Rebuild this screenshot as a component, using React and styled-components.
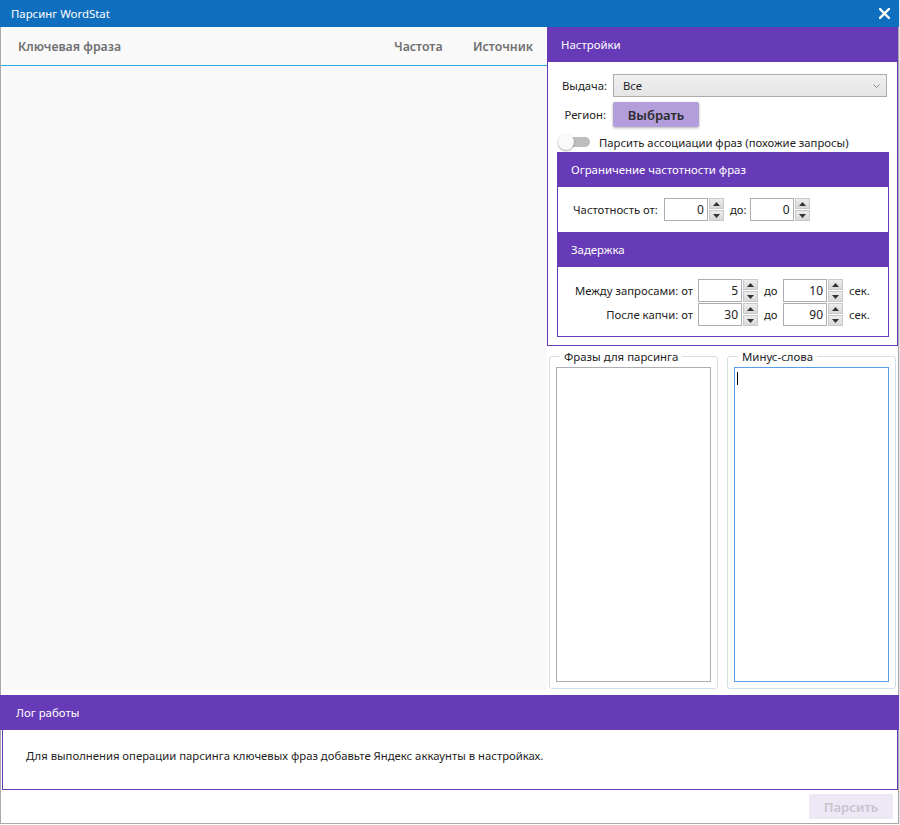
import React from "react";
import styled, { createGlobalStyle } from "styled-components";

const Global = createGlobalStyle`
  html, body { margin: 0; padding: 0; background: #ffffff; }
  body { font-family: "Noto Sans", "Open Sans", sans-serif; font-size: 11.3px; color: #222; }
  * { box-sizing: border-box; }
`;

const PURPLE = "#673ab7";

const Window = styled.div`
  width: 899px;
  height: 824px;
  display: flex;
  flex-direction: column;
  border: 1px solid #a9a9a9;
  border-top: none;
  background: #fff;
  box-shadow: 1px 1px 2px rgba(0,0,0,0.15);
`;

const TitleBar = styled.div`
  height: 27px;
  margin: 0 -1px;
  background: #106ebe;
  color: #fff;
  display: flex;
  align-items: center;
  justify-content: space-between;
  padding: 0 9px 0 11px;
  font-size: 11.4px;
  flex-shrink: 0;
`;

const CloseBtn = styled.div`
  width: 12px;
  height: 12px;
  display: flex;
  align-items: center;
  justify-content: center;
`;

const Main = styled.div`
  display: flex;
  height: 663px;
  flex-shrink: 0;
`;

const ListPanel = styled.div`
  width: 546px;
  background: #f9f9f9;
  display: flex;
  flex-direction: column;
`;

const ListHeader = styled.div`
  height: 39px;
  display: flex;
  align-items: center;
  border-bottom: 1px solid #2aa8e2;
  color: #707070;
  font-weight: 600;
  font-size: 12.3px;
  padding-left: 17px;
`;

const HeaderCell = styled.div`
  flex: ${(p) => (p.$grow ? 1 : "none")};
  width: ${(p) => (p.$w ? p.$w + "px" : "auto")};
`;

const RightPanel = styled.div`
  width: 351px;
  display: flex;
  flex-direction: column;
`;

const Group = styled.div`
  border: 1px solid ${PURPLE};
  border-top: none;
  display: flex;
  flex-direction: column;
`;

const GroupHeader = styled.div`
  height: ${(p) => p.$h || 35}px;
  background: ${PURPLE};
  color: #fff;
  display: flex;
  align-items: center;
  padding-left: ${(p) => p.$pl || 14}px;
  font-size: 11.4px;
  flex-shrink: 0;
`;

const SettingsBody = styled.div`
  padding: 12px 8px 8px 8px;
  display: flex;
  flex-direction: column;
`;

const FormGrid = styled.div`
  display: grid;
  grid-template-columns: 44px 1fr;
  column-gap: 7px;
  row-gap: 5px;
  align-items: center;
  padding-left: 6px;
  padding-right: 2px;
`;

const Label = styled.div`
  text-align: ${(p) => p.$align || "left"};
  white-space: nowrap;
  color: #222;
`;

const Combo = styled.div`
  height: 23px;
  border: 1px solid #acacac;
  background: linear-gradient(#f0f0f0, #e5e5e5);
  display: flex;
  align-items: center;
  justify-content: space-between;
  padding: 0 6px 0 9px;
`;

const ChooseRow = styled.div`
  display: flex;
`;

const ChooseBtn = styled.div`
  width: 86px;
  height: 25px;
  background: #b39ddb;
  color: #2b2b2b;
  font-size: 13px;
  font-weight: 600;
  display: flex;
  align-items: center;
  justify-content: center;
  border-radius: 2px;
  box-shadow: 0 1px 3px rgba(0,0,0,0.3);
`;

const ToggleRow = styled.div`
  display: flex;
  align-items: center;
  gap: 9px;
  height: 18px;
  margin-top: 6px;
  padding-left: 2px;
`;

const Toggle = styled.div`
  width: 32px;
  height: 16px;
  display: flex;
  align-items: center;
  justify-content: flex-end;
  position: relative;
`;

const Track = styled.div`
  width: 28px;
  height: 10px;
  border-radius: 5px;
  background: #bdbdbd;
`;

const Knob = styled.div`
  position: absolute;
  left: 0;
  top: 0;
  width: 16px;
  height: 16px;
  border-radius: 50%;
  background: #fafafa;
  box-shadow: 0 1px 2px rgba(0,0,0,0.35);
`;

const InnerGroup = styled(Group)`
  margin: 1px 0 0 1px;
`;

const InnerBody = styled.div`
  display: flex;
  flex-direction: column;
  justify-content: ${(p) => (p.$top ? "flex-start" : "center")};
  gap: 1px;
  padding: ${(p) => p.$pad || "0 0 0 15px"};
  height: ${(p) => p.$h}px;
`;

const FieldRow = styled.div`
  display: flex;
  align-items: center;
`;

const RowLabel = styled.div`
  width: ${(p) => (p.$w ? p.$w + "px" : "auto")};
  text-align: ${(p) => p.$align || "right"};
  white-space: nowrap;
  margin: 0 ${(p) => p.$mr ?? 5}px 0 ${(p) => p.$ml ?? 0}px;
`;

const Numeric = styled.div`
  display: flex;
  width: 60px;
  height: 23px;
`;

const NumBox = styled.div`
  flex: 1;
  border: 1px solid #abadb3;
  background: #fff;
  display: flex;
  align-items: center;
  justify-content: flex-end;
  padding-right: 3px;
  font-size: 12px;
`;

const Spin = styled.div`
  width: 16px;
  display: flex;
  flex-direction: column;
  gap: 1px;
  padding: 0 0 0 1px;
`;

const SpinBtn = styled.div`
  flex: 1;
  background: linear-gradient(#ececec, #d8d8d8);
  border: 1px solid #c9c9c9;
  display: flex;
  align-items: center;
  justify-content: center;
`;

const Lists = styled.div`
  display: flex;
  gap: 9px;
  padding: 3px 2px 0 2px;
  flex: 1;
`;

const Fieldset = styled.fieldset`
  flex: 1;
  margin: 0;
  border: 1px solid #d5dfe6;
  border-radius: 3px;
  padding: 0 6px 6px 6px;
  display: flex;
  flex-direction: column;
  height: 340px;
  min-width: 0;
`;

const Legend = styled.legend`
  padding: 0 4px;
  margin-left: 4px;
  font-size: 11.4px;
  color: #222;
  line-height: 15px;
`;

const TextArea = styled.div`
  flex: 1;
  border: 1px solid ${(p) => (p.$focus ? "#569de5" : "#abadb3")};
  background: #fff;
  padding: 4px 2px;
  margin-top: 3px;
`;

const Caret = styled.div`
  width: 1px;
  height: 13px;
  background: #000;
`;

const LogSection = styled.div`
  margin-top: 5px;
  display: flex;
  flex-direction: column;
`;

const LogHeader = styled(GroupHeader)`
  margin: 0 -1px;
  padding-left: 16px;
`;

const LogBody = styled.div`
  height: 60px;
  border: 1px solid ${PURPLE};
  border-top: none;
  margin: 0 0 0 1px;
  display: flex;
  align-items: center;
  padding: 0 0 8px 23px;
  font-size: 11.3px;
  color: #1e1e1e;
`;

const Footer = styled.div`
  flex: 1;
  display: flex;
  justify-content: flex-end;
  align-items: flex-start;
  padding: 4px 5px 0 0;
`;

const ParseBtn = styled.div`
  width: 84px;
  height: 25px;
  background: #ede7f6;
  color: #c7c4cc;
  font-size: 13px;
  font-weight: 600;
  display: flex;
  align-items: center;
  justify-content: center;
  border-radius: 2px;
`;

function Tri({ up }) {
  return (
    <svg width="7" height="4" viewBox="0 0 7 4">
      <path d={up ? "M0 4 L3.5 0 L7 4 Z" : "M0 0 L3.5 4 L7 0 Z"} fill="#333" />
    </svg>
  );
}

function NumericUpDown({ value }) {
  return (
    <Numeric>
      <NumBox>{value}</NumBox>
      <Spin>
        <SpinBtn><Tri up /></SpinBtn>
        <SpinBtn><Tri /></SpinBtn>
      </Spin>
    </Numeric>
  );
}

function DelayRow({ label, from, to }) {
  return (
    <FieldRow>
      <RowLabel $w={120}>{label}</RowLabel>
      <NumericUpDown value={from} />
      <RowLabel $w={19} $ml={6} $mr={0} $align="left">до</RowLabel>
      <NumericUpDown value={to} />
      <RowLabel $ml={6} $mr={0} $align="left">сек.</RowLabel>
    </FieldRow>
  );
}

export default function App() {
  return (
    <>
      <Global />
      <Window>
        <TitleBar>
          <span>Парсинг WordStat</span>
          <CloseBtn>
            <svg width="11" height="11" viewBox="0 0 11 11">
              <path d="M1 1 L10 10 M10 1 L1 10" stroke="#fff" strokeWidth="2.4" strokeLinecap="square" />
            </svg>
          </CloseBtn>
        </TitleBar>
        <Main>
          <ListPanel>
            <ListHeader>
              <HeaderCell $grow>Ключевая фраза</HeaderCell>
              <HeaderCell $w={79}>Частота</HeaderCell>
              <HeaderCell $w={74}>Источник</HeaderCell>
            </ListHeader>
          </ListPanel>
          <RightPanel>
            <Group>
              <GroupHeader $h={35} $pl={13}>Настройки</GroupHeader>
              <SettingsBody>
                <FormGrid>
                  <Label>Выдача:</Label>
                  <Combo>
                    <span>Все</span>
                    <svg width="7" height="4" viewBox="0 0 7 4">
                      <path d="M0.5 0.5 L3.5 3.5 L6.5 0.5" stroke="#888" fill="none" />
                    </svg>
                  </Combo>
                  <Label $align="right">Регион:</Label>
                  <ChooseRow>
                    <ChooseBtn>Выбрать</ChooseBtn>
                  </ChooseRow>
                </FormGrid>
                <ToggleRow>
                  <Toggle>
                    <Track />
                    <Knob />
                  </Toggle>
                  <span>Парсить ассоциации фраз (похожие запросы)</span>
                </ToggleRow>
                <InnerGroup>
                  <GroupHeader $h={35} $pl={13}>Ограничение частотности фраз</GroupHeader>
                  <InnerBody $h={45}>
                    <FieldRow>
                      <RowLabel $mr={6}>Частотность от:</RowLabel>
                      <NumericUpDown value="0" />
                      <RowLabel $ml={6} $mr={3}>до:</RowLabel>
                      <NumericUpDown value="0" />
                    </FieldRow>
                  </InnerBody>
                  <GroupHeader $h={35} $pl={13}>Задержка</GroupHeader>
                  <InnerBody $h={69} $top $pad="12px 0 0 15px">
                    <DelayRow label="Между запросами: от" from="5" to="10" />
                    <DelayRow label="После капчи: от" from="30" to="90" />
                  </InnerBody>
                </InnerGroup>
              </SettingsBody>
            </Group>
            <Lists>
              <Fieldset>
                <Legend>Фразы для парсинга</Legend>
                <TextArea />
              </Fieldset>
              <Fieldset>
                <Legend>Минус-слова</Legend>
                <TextArea $focus>
                  <Caret />
                </TextArea>
              </Fieldset>
            </Lists>
          </RightPanel>
        </Main>
        <LogSection>
          <LogHeader>Лог работы</LogHeader>
          <LogBody>
            Для выполнения операции парсинга ключевых фраз добавьте Яндекс аккаунты в настройках.
          </LogBody>
        </LogSection>
        <Footer>
          <ParseBtn>Парсить</ParseBtn>
        </Footer>
      </Window>
    </>
  );
}
